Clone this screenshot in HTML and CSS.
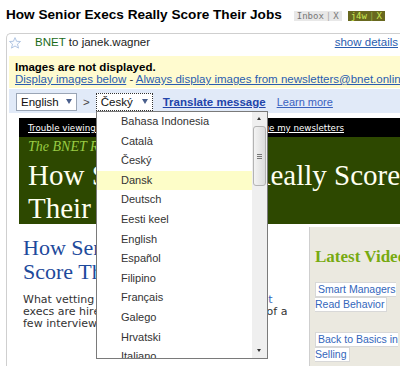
FILE: index.html
```html
<!DOCTYPE html>
<html>
<head>
<meta charset="utf-8">
<link rel="stylesheet" href="styles.css">
</head>
<body>
<div class="subject">
  <h1>How Senior Execs Really Score Their Jobs</h1>
  <div class="labels">
    <span class="label inbox">Inbox<span class="sep">|</span>X</span>
    <span class="label j4w">j4w<span class="sep">|</span>X</span>
  </div>
</div>
<div class="card">
  <div class="header">
    <svg class="star" width="12" height="12" viewBox="0 0 12 12"><polygon points="6,0.6 7.6,4.3 11.5,4.5 8.5,7.1 9.5,11.1 6,9 2.5,11.1 3.5,7.1 0.5,4.5 4.4,4.3" fill="#fafcff" stroke="#a8bedf" stroke-width="0.9" stroke-linejoin="round"/></svg>
    <span class="from">BNET</span><span class="to">&nbsp;to janek.wagner</span>
    <a class="details">show details</a>
  </div>
  <div class="images">
    <div class="images-title">Images are not displayed.</div>
    <div class="images-links"><a>Display images below</a> - <a>Always display images from newsletters@bnet.online.com</a></div>
  </div>
  <div class="translate">
    <div class="sel sel-en"><span>English</span><span class="arrow"></span></div>
    <span class="gt">&gt;</span>
    <div class="sel sel-cs"><span>Český</span><span class="arrow"></span></div>
    <a class="tr-link">Translate message</a>
    <a class="learn">Learn more</a>
  </div>
  <div class="mail">
    <div class="trouble"><a>Trouble viewing this email? View it on the web</a><span class="sep">|</span><a>Manage my newsletters</a></div>
    <div class="banner">
      <div class="report">The BNET Report</div>
      <div class="big">How Senior Execs Really Score<br>Their Jobs</div>
    </div>
    <div class="content">
      <div class="main">
        <div class="headline">How Senior Execs Really<br>Score Their Jobs</div>
        <div class="desc">What vetting process do new senior hires <span class="blue">get</span><br>execs are hired on the basis of the strength of a<br>few interviews and a reference check.</div>
      </div>
      <div class="side">
        <div class="side-title">Latest Videos</div>
        <div class="vid"><span>Smart Managers<br>Read Behavior</span></div>
        <div class="vid"><span>Back to Basics in<br>Selling</span></div>
      </div>
    </div>
  </div>
</div>
<div class="dropdown">
  <ul class="options">
    <li>Bahasa Indonesia</li>
    <li>Català</li>
    <li>Český</li>
    <li class="hover">Dansk</li>
    <li>Deutsch</li>
    <li>Eesti keel</li>
    <li>English</li>
    <li>Español</li>
    <li>Filipino</li>
    <li>Français</li>
    <li>Galego</li>
    <li>Hrvatski</li>
    <li>Italiano</li>
  </ul>
  <div class="scrollbar">
    <div class="sb-btn up"></div>
    <div class="sb-thumb"><span></span><span></span><span></span></div>
    <div class="sb-track"></div>
    <div class="sb-btn down"></div>
  </div>
</div>
</body>
</html>
```

FILE: styles.css
```css
* { box-sizing: border-box; }
html, body { margin: 0; padding: 0; }
body {
  width: 400px;
  height: 366px;
  overflow: hidden;
  position: relative;
  background: #fff;
  font-family: "Liberation Sans", Arial, sans-serif;
  color: #222;
}
a { cursor: pointer; }

.subject {
  height: 33px;
  padding: 5px 0 0 6px;
  display: flex;
  align-items: flex-start;
  white-space: nowrap;
}
.subject h1 {
  margin: 0;
  font-size: 13.6px;
  line-height: 20px;
  font-weight: bold;
  color: #000;
}
.labels { display: flex; gap: 6px; margin: 6px 0 0 12px; }
.label {
  display: flex;
  gap: 2px;
  height: 10px;
  padding: 0 3px;
  font: 9px/10px "DejaVu Sans Mono", monospace;
}
.inbox { background: #e8e8e8; color: #777; }
.inbox .sep { color: #aaa; }
.j4w { background: #68681f; color: #cce855; }
.j4w .sep { color: #99a844; }

.card {
  margin-left: 6px;
  width: 420px;
  border: 1px solid #cfcfcf;
  border-right: none;
  border-bottom: none;
  border-top-left-radius: 5px;
  padding-left: 2px;
  font-size: 11.5px;
}
.header {
  height: 22px;
  padding-top: 1px;
  line-height: 14px;
  display: flex;
  align-items: flex-start;
  white-space: nowrap;
  width: 389px;
}
.star { margin: 2px 14px 0 0; flex: none; }
.from { color: #1a6b1a; }
.to { color: #222; }
.details { margin-left: auto; color: #2a5db0; text-decoration: underline; }

.images {
  background: #fffbcf;
  height: 32px;
  padding: 4.5px 0 0 6px;
  line-height: 12.5px;
  white-space: nowrap;
}
.images-title { font-weight: bold; color: #000; }
.images-links { color: #333; }
.images-links a { color: #2a5db0; text-decoration: underline; }

.translate {
  margin-top: 1px;
  background: #e1eaf8;
  height: 24px;
  padding: 4px 0 0 7px;
  display: flex;
  align-items: flex-start;
  white-space: nowrap;
  font-size: 11.5px;
}
.sel {
  height: 18px;
  background: #fff;
  border: 1px solid #9aa5b5;
  display: flex;
  align-items: center;
  justify-content: space-between;
  padding: 0 4px 0 4px;
  font-size: 11.5px;
  color: #111;
}
.sel-en { width: 61px; }
.sel-cs { width: 57px; border: 1px dotted #333; }
.arrow {
  width: 0; height: 0;
  border-left: 3px solid transparent;
  border-right: 3px solid transparent;
  border-top: 5px solid #4a5f8c;
  margin-bottom: 2px;
}
.gt { margin: 1px 6px 0 6px; color: #444; line-height: 16px; }
.tr-link {
  margin: 2px 0 0 10px;
  font-weight: bold;
  color: #2244aa;
  text-decoration: underline;
  font-size: 11.5px;
  line-height: 14px;
}
.learn {
  margin: 2px 0 0 11px;
  color: #3a62c0;
  text-decoration: underline;
  font-size: 11px;
  line-height: 14px;
}

.mail { margin: 5px 0 0 10px; }
.trouble {
  background: #000;
  height: 19px;
  padding: 5px 0 0 9px;
  font: 8.7px/11px "DejaVu Sans", Verdana, sans-serif;
  color: #fff;
  white-space: nowrap;
}
.trouble a { color: #fff; text-decoration: underline; }
.trouble .sep { margin: 0 4px; }
.banner {
  background: #2d4800;
  height: 87px;
  padding: 3px 0 0 9px;
  white-space: nowrap;
  font-family: "Liberation Serif", Georgia, serif;
}
.report { font-style: italic; color: #99cc44; font-size: 14px; line-height: 14px; }
.big { color: #fffff0; font-size: 29px; line-height: 33px; margin-top: 5px; }

.content { display: flex; height: 160px; }
.main { width: 290px; padding: 12px 0 0 4px; white-space: nowrap; }
.headline {
  font-family: "Liberation Serif", Georgia, serif;
  font-size: 22px;
  line-height: 24px;
  color: #1d4a9c;
}
.desc {
  margin-top: 10px;
  font: 11px/12px "DejaVu Sans", Verdana, sans-serif;
  color: #333;
}
.blue { color: #3366bb; }
.side {
  margin-top: 3px;
  flex: 1;
  background: #ebe9e0;
  border-left: 1px solid #cfcfcf;
  padding: 20px 0 0 5px;
  white-space: nowrap;
}
.side-title {
  font-family: "Liberation Serif", Georgia, serif;
  font-weight: bold;
  font-size: 17px;
  line-height: 20px;
  color: #77aa11;
}
.vid {
  margin-top: 15px;
  font-size: 10.5px;
  line-height: 15px;
  color: #3366bb;
}
.vid span {
  background: #fff;
  border: 1px solid #d8d8d8;
  padding: 0 2px 1px 2px;
}
.vid + .vid { margin-top: 20px; }

.dropdown {
  position: absolute;
  left: 96px;
  top: 111px;
  width: 172px;
  height: 248px;
  background: #fff;
  border: 1px solid #7a7a7a;
  overflow: hidden;
  display: flex;
}
.options {
  list-style: none;
  margin: 0;
  padding: 0;
  flex: 1;
  font-size: 11px;
  color: #333;
}
.options li {
  height: 19.6px;
  line-height: 19.6px;
  padding-left: 24px;
  white-space: nowrap;
}
.options li.hover { background: #fdfdc8; }
.scrollbar {
  width: 15px;
  flex: none;
  background: #efefef;
  display: flex;
  flex-direction: column;
  align-items: center;
}
.sb-btn { height: 14px; width: 13px; position: relative; }
.sb-btn.up::after, .sb-btn.down::after {
  content: "";
  position: absolute;
  left: 4px;
  width: 0; height: 0;
  border-left: 2.5px solid transparent;
  border-right: 2.5px solid transparent;
}
.sb-btn.up::after { top: 5px; border-bottom: 3px solid #333; }
.sb-btn.down::after { top: 5px; border-top: 3px solid #333; }
.sb-thumb {
  width: 13px;
  height: 60px;
  border: 1px solid #b3b3b3;
  border-radius: 3px;
  background: linear-gradient(to right, #f3f3f3, #dcdcdc);
  display: flex;
  flex-direction: column;
  align-items: center;
  justify-content: center;
  gap: 1px;
}
.sb-thumb span { width: 5px; height: 1px; background: #777; }
.sb-track { flex: 1; }
```
